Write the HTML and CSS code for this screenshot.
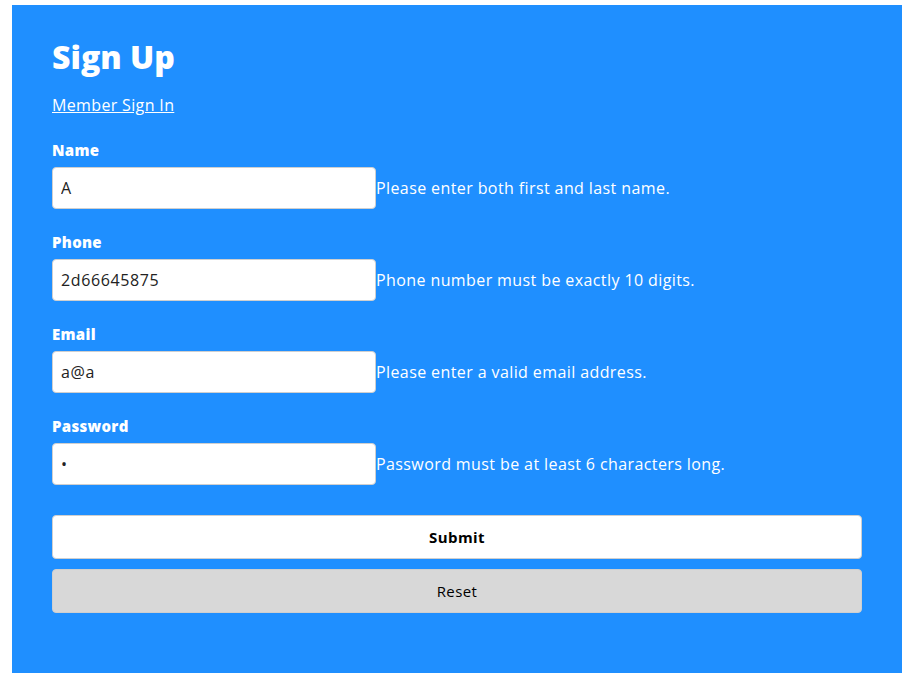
FILE: index.html
```html
<!DOCTYPE html>
<html lang="en">
<head>
<meta charset="utf-8">
<title>Sign Up</title>
<link rel="stylesheet" href="styles.css">
</head>
<body>
<main class="panel">
  <h1 class="title">Sign Up</h1>
  <a class="signin" href="#">Member Sign In</a>
  <form class="form">
    <div class="field">
      <label class="label" for="name">Name</label>
      <div class="row">
        <input class="input" id="name" type="text" value="A">
        <span class="error">Please enter both first and last name.</span>
      </div>
    </div>
    <div class="field">
      <label class="label" for="phone">Phone</label>
      <div class="row">
        <input class="input" id="phone" type="text" value="2d66645875">
        <span class="error">Phone number must be exactly 10 digits.</span>
      </div>
    </div>
    <div class="field">
      <label class="label" for="email">Email</label>
      <div class="row">
        <input class="input" id="email" type="text" value="a@a">
        <span class="error">Please enter a valid email address.</span>
      </div>
    </div>
    <div class="field">
      <label class="label" for="password">Password</label>
      <div class="row">
        <input class="input" id="password" type="password" value="a">
        <span class="error">Password must be at least 6 characters long.</span>
      </div>
    </div>
    <div class="buttons">
      <button class="btn btn-submit" type="submit">Submit</button>
      <button class="btn btn-reset" type="reset">Reset</button>
    </div>
  </form>
</main>
</body>
</html>
```
FILE: styles.css
```css
html, body {
  margin: 0;
  padding: 0;
  background: #ffffff;
}
body {
  font-family: "Open Sans", "DejaVu Sans", sans-serif;
  color: #ffffff;
  padding: 5px 14px 12px 12px;
}
.panel {
  background: #1f8fff;
  height: 668px;
  box-sizing: border-box;
  padding: 32px 40px 0 40px;
  display: flex;
  flex-direction: column;
}
.title {
  margin: 0;
  font-size: 32px;
  line-height: 40px;
  font-weight: 800;
}
.signin {
  color: #ffffff;
  font-size: 16px;
  line-height: 22px;
  letter-spacing: 0.35px;
  margin-top: 17px;
  align-self: flex-start;
}
.form {
  display: flex;
  flex-direction: column;
  margin-top: 24px;
}
.field {
  display: flex;
  flex-direction: column;
  gap: 7px;
  margin-bottom: 23px;
}
.label {
  font-weight: 800;
  font-size: 15px;
  line-height: 20px;
  letter-spacing: 0.3px;
}
.row {
  display: flex;
  align-items: center;
}
.input {
  width: 324px;
  height: 42px;
  box-sizing: border-box;
  border: 1px solid #cfcfcf;
  border-radius: 4px;
  padding: 0 8px;
  font-family: "Open Sans", "DejaVu Sans", sans-serif;
  font-size: 16px;
  letter-spacing: 0.6px;
  color: #222222;
  background: #ffffff;
  outline: none;
}
.error {
  font-size: 16px;
  line-height: 22px;
  letter-spacing: 0.4px;
}
.buttons {
  display: flex;
  flex-direction: column;
  gap: 10px;
  margin-top: 7px;
}
.btn {
  height: 44px;
  border: 1px solid #cfcfcf;
  border-radius: 4px;
  font-family: "Open Sans", "DejaVu Sans", sans-serif;
  font-size: 15px;
  letter-spacing: 0.4px;
  color: #000000;
  cursor: pointer;
}
.btn-submit {
  background: #ffffff;
  font-weight: 700;
}
.btn-reset {
  background: #d8d8d8;
  font-weight: 400;
}
```
